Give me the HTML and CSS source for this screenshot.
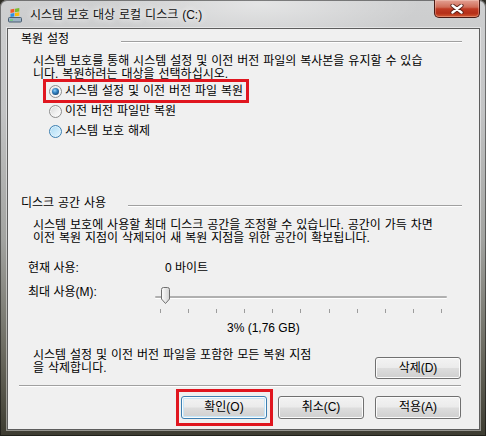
FILE: index.html
```html
<!DOCTYPE html>
<html>
<head>
    <title>시스템 보호 대상 로컬 디스크 (C:)</title>
    <link rel="stylesheet" href="styles.css">
</head>
<body>
    <div class="window">
        <div class="titlebar">
            <svg class="app-icon" width="16" height="16" viewBox="0 0 16 16">
                <rect x="1.5" y="10.5" width="13" height="4.5" rx="1" fill="#9fb4c6" stroke="#4b5f72"/>
                <rect x="3" y="12.5" width="3" height="1" fill="#58d858"/>
                <path d="M3.5 2.6 L7.3 1.8 L7.3 5.3 L3.5 6 Z" fill="#f05a28"/>
                <path d="M8 1.7 L12.3 0.9 L12.3 4.6 L8 5.2 Z" fill="#7cbb2a"/>
                <path d="M3.5 6.7 L7.3 6 L7.3 9.4 L3.5 10 Z" fill="#2f8fe0"/>
                <path d="M8 5.9 L12.3 5.3 L12.3 8.8 L8 9.3 Z" fill="#fbbc09"/>
            </svg>
            <span class="title">시스템 보호 대상 로컬 디스크 (C:)</span>
            <div class="close-btn">
                <svg width="14" height="10" viewBox="0 0 14 10">
                    <path d="M2.5 1.5 L11.5 8.5 M11.5 1.5 L2.5 8.5" stroke="#5b2119" stroke-width="4.2" stroke-linecap="round"/>
                    <path d="M2.5 1.5 L11.5 8.5 M11.5 1.5 L2.5 8.5" stroke="#ffffff" stroke-width="2.4" stroke-linecap="round"/>
                </svg>
            </div>
        </div>

        <div class="client">
            <div class="group-head head-restore">
                <span class="group-label">복원 설정</span>
                <span class="rule"></span>
            </div>
            <p class="desc desc-top">시스템 보호를 통해 시스템 설정 및 이전 버전 파일의 복사본을 유지할 수 있습<br>니다. 복원하려는 대상을 선택하십시오.</p>

            <div class="radio-list">
                <div class="radio-row"><span class="radio marked"><span class="radio-dot checked"></span>시스템 설정 및 이전 버전 파일 복원</span></div>
                <div class="radio-row"><span class="radio"><span class="radio-dot"></span>이전 버전 파일만 복원</span></div>
                <div class="radio-row"><span class="radio"><span class="radio-dot hot"></span>시스템 보호 해제</span></div>
            </div>

            <div class="group-head head-disk">
                <span class="group-label">디스크 공간 사용</span>
                <span class="rule"></span>
            </div>
            <p class="desc desc-disk">시스템 보호에 사용할 최대 디스크 공간을 조정할 수 있습니다. 공간이 가득 차면<br>이전 복원 지점이 삭제되어 새 복원 지점을 위한 공간이 확보됩니다.</p>

            <div class="usage-row">
                <span class="usage-label">현재 사용:</span>
                <span>0 바이트</span>
            </div>

            <div class="slider-row">
                <span class="slider-label">최대 사용(M):</span>
                <div class="slider">
                    <div class="track"></div>
                    <svg class="thumb" width="11" height="18" viewBox="0 0 11 18">
                        <defs>
                            <linearGradient id="thumbFill" x1="0" x2="1" y1="0" y2="0">
                                <stop offset="0" stop-color="#fdfdfd"/>
                                <stop offset="1" stop-color="#d2d2d2"/>
                            </linearGradient>
                        </defs>
                        <path d="M1.5 2.5 Q1.5 0.5 3.5 0.5 H7.5 Q9.5 0.5 9.5 2.5 V12 L5.5 16.5 L1.5 12 Z" fill="url(#thumbFill)" stroke="#6f6f6f"/>
                    </svg>
                    <div class="ticks">
                        <i></i><i></i><i></i><i></i><i></i><i></i><i></i><i></i><i></i><i></i><i></i>
                    </div>
                </div>
            </div>

            <div class="usage-pct">3% (1,76 GB)</div>

            <div class="delete-row">
                <p class="desc desc-delete">시스템 설정 및 이전 버전 파일을 포함한 모든 복원 지점<br>을 삭제합니다.</p>
                <button class="btn btn-delete">삭제(D)</button>
            </div>

            <div class="separator"></div>

            <div class="button-row">
                <button class="btn btn-default marked">확인(O)</button>
                <button class="btn">취소(C)</button>
                <button class="btn">적용(A)</button>
            </div>
        </div>
    </div>
</body>
</html>
```

FILE: styles.css
```css
* {
    box-sizing: border-box;
}

body {
    margin: 0;
    background-color: #2e2d26;
    font-family: "Liberation Sans", "Noto Sans CJK KR", sans-serif;
    font-size: 12px;
    color: #000000;
}

.window {
    width: 486px;
    height: 436px;
    display: flex;
    flex-direction: column;
    padding: 0 6px 6px 7px;
    border-radius: 7px 7px 0 0;
    background:
        radial-gradient(ellipse 160px 40px at 260px 4px, rgba(255, 255, 255, 0.45), rgba(255, 255, 255, 0)),
        linear-gradient(180deg, #cfd0d1 0%, #c3c4c5 25%, #a2a3a0 55%, #6d6c62 80%, #3d3c31 100%);
    box-shadow: inset 0 0 0 1px rgba(0, 0, 0, 0.45);
}

.titlebar {
    height: 28px;
    display: flex;
    align-items: flex-start;
}

.app-icon {
    margin-top: 7px;
    margin-right: 7px;
    flex-shrink: 0;
}

.title {
    margin-top: 7px;
    line-height: 16px;
    color: #111111;
    white-space: nowrap;
    word-spacing: 0.6px;
    text-shadow: 0 0 6px #ffffff, 0 0 10px rgba(255, 255, 255, 0.8);
}

.close-btn {
    margin-left: auto;
    width: 46px;
    height: 18px;
    display: flex;
    align-items: center;
    justify-content: center;
    border: 1px solid #4a1a14;
    border-top: none;
    border-radius: 0 0 5px 5px;
    background: linear-gradient(180deg, #e3a194 0%, #d06d58 42%, #bf3b24 52%, #b52f19 78%, #d35a33 100%);
    box-shadow: inset 0 0 0 1px rgba(255, 220, 210, 0.35);
}

.client {
    flex: 1;
    display: flex;
    flex-direction: column;
    padding: 0 18px 0 11px;
    background-color: #f0f0f0;
    border: 1px solid #5d5d5d;
    box-shadow: 0 0 0 1px rgba(255, 255, 255, 0.45);
}

.group-head {
    display: flex;
    align-items: flex-start;
    line-height: 12px;
    margin-left: 2px;
    margin-right: -1px;
}

.head-restore {
    margin-top: 4px;
}

.head-restore .group-label {
    width: 100px;
}

.head-disk {
    margin-top: 56px;
}

.head-disk .group-label {
    width: 107px;
}

.group-label {
    white-space: nowrap;
    word-spacing: 0.6px;
}

.rule {
    flex: 1;
    height: 2px;
    margin-top: 8px;
    border-top: 1px solid #a0a0a0;
    border-bottom: 1px solid #ffffff;
}

.desc {
    margin: 0;
    line-height: 13px;
    white-space: nowrap;
    word-spacing: 0.6px;
}

.desc-top {
    margin: 10px 0 0 14px;
}

.radio-list {
    margin: 0 0 0 30px;
}

.radio-row {
    height: 20px;
    display: flex;
    align-items: center;
}

.radio {
    position: relative;
    display: inline-flex;
    align-items: center;
    line-height: 12px;
    white-space: nowrap;
    word-spacing: 0.6px;
}

.radio-dot {
    position: relative;
    width: 13px;
    height: 13px;
    margin-right: 3px;
    border-radius: 50%;
    border: 1px solid #8d8d8d;
    background: linear-gradient(135deg, #d4d4d4 0%, #f2f2f2 60%, #ffffff 100%);
    box-shadow: inset 0 0 0 1px #f6f6f6;
}

.radio-dot.checked::before {
    content: "";
    position: absolute;
    left: 2px;
    top: 2px;
    width: 7px;
    height: 7px;
    border-radius: 50%;
    background: radial-gradient(circle at 40% 35%, #8fd0f5 0%, #2f7fc0 40%, #0b2c4c 100%);
}

.radio-dot.hot {
    border-color: #3c7fb1;
    background: linear-gradient(135deg, #a9d8f2 0%, #cdebfb 60%, #eaf7fe 100%);
    box-shadow: inset 0 0 0 1px #def2fc;
}

.marked::after {
    content: "";
    position: absolute;
    border: 3px solid #e0161f;
    pointer-events: none;
}

.radio.marked::after {
    top: -6px;
    bottom: -5px;
    left: -6px;
    right: -6px;
}

.desc-disk {
    margin: 10px 0 0 14px;
}

.usage-row {
    display: flex;
    margin: 17px 0 0 9px;
    line-height: 12px;
    white-space: nowrap;
}

.usage-label {
    width: 137px;
}

.slider-row {
    display: flex;
    align-items: flex-start;
    margin: 12px 0 0 9px;
}

.slider-label {
    width: 127px;
    line-height: 12px;
    white-space: nowrap;
}

.slider {
    position: relative;
    width: 292px;
    padding-top: 10px;
}

.track {
    height: 2px;
    border-radius: 1px;
    background-color: #b0b0b0;
    box-shadow: 0 1px 0 #ffffff;
}

.thumb {
    position: absolute;
    left: 5px;
    top: 1px;
}

.ticks {
    display: flex;
    justify-content: space-between;
    width: 282px;
    margin: 11px 0 0 5px;
}

.ticks i {
    width: 1px;
    height: 4px;
    background-color: #9c9c9c;
}

.usage-pct {
    margin: 9px 0 0 208px;
    line-height: 12px;
    white-space: nowrap;
}

.delete-row {
    display: flex;
    justify-content: space-between;
    align-items: flex-start;
    margin-top: 15px;
}

.desc-delete {
    margin-left: 14px;
}

.btn {
    position: relative;
    width: 86px;
    height: 23px;
    padding: 0;
    font-family: inherit;
    font-size: 12px;
    line-height: 21px;
    color: #000000;
    border: 1px solid #707070;
    border-radius: 3px;
    background: linear-gradient(180deg, #f3f3f3 0%, #ebebeb 48%, #dddddd 52%, #cfcfcf 100%);
    box-shadow: inset 0 0 0 1px #fbfbfb;
}

.btn-delete {
    margin-top: 8px;
    height: 22px;
}

.btn-default {
    border-color: #3c7fb1;
    box-shadow: inset 0 0 0 1px #fbfbfb, inset 0 0 0 2px #c6e6f8;
}

.btn.marked::after {
    top: -8px;
    bottom: -8px;
    left: -6px;
    right: -7px;
}

.separator {
    height: 2px;
    margin-top: 6px;
    border-top: 1px solid #a0a0a0;
    border-bottom: 1px solid #ffffff;
}

.button-row {
    display: flex;
    justify-content: flex-end;
    gap: 11px;
    margin-top: 9px;
}
```
